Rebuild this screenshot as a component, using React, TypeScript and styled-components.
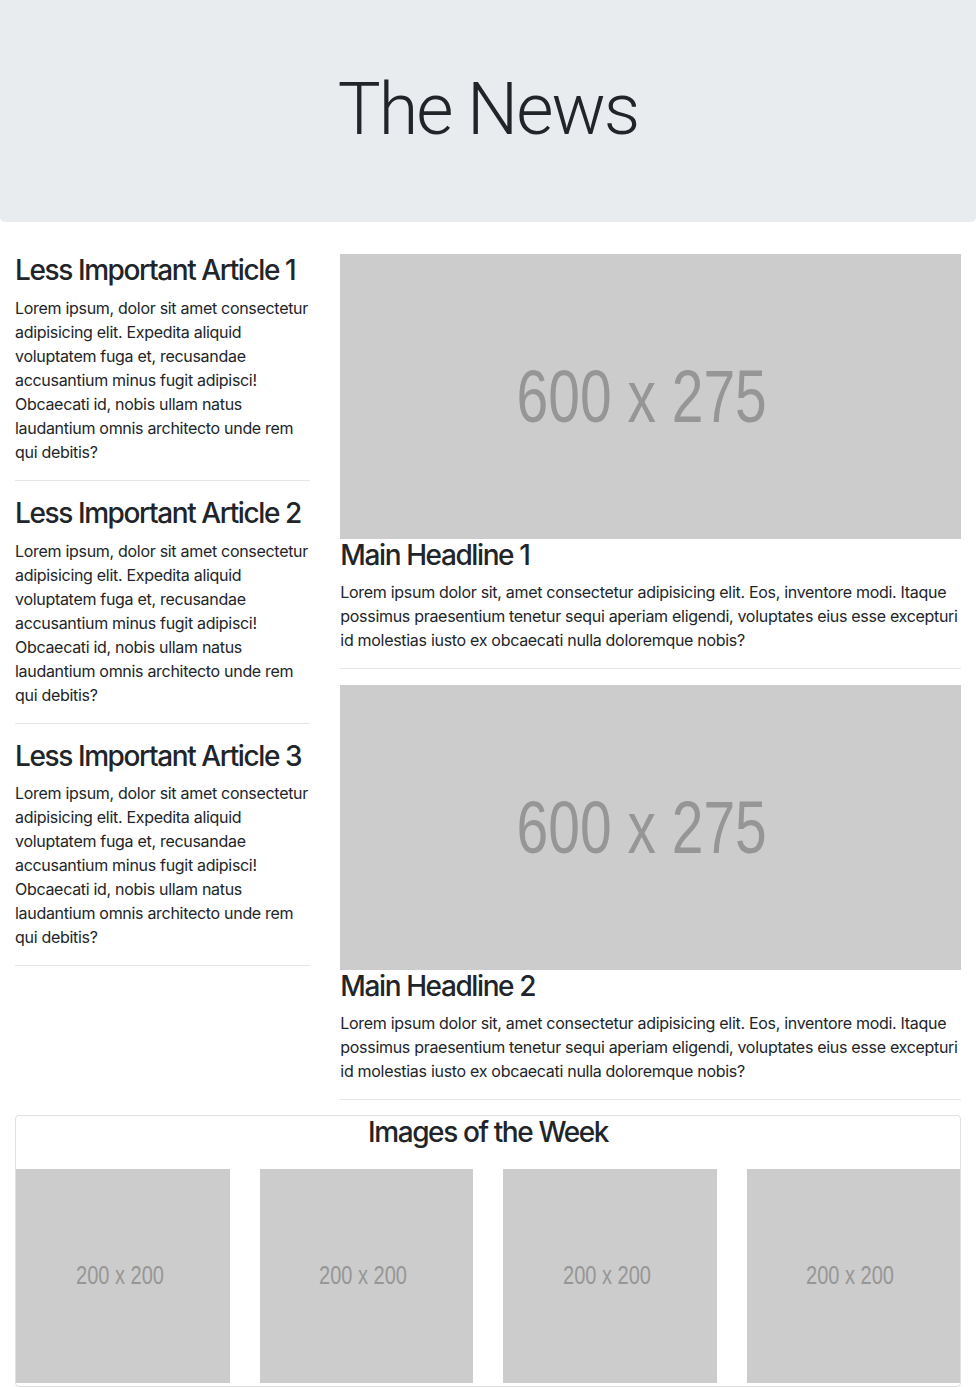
import styled, { createGlobalStyle } from 'styled-components';

const GlobalStyle = createGlobalStyle`
  *, *::before, *::after {
    box-sizing: border-box;
  }

  body {
    margin: 0;
    font-family: Inter, "Noto Sans", "Liberation Sans", sans-serif;
    font-size: 16px;
    line-height: 1.5;
    letter-spacing: -0.3px;
    color: #212529;
    background-color: #fff;
  }
`;

const LOREM_SIDE =
  'Lorem ipsum, dolor sit amet consectetur adipisicing elit. Expedita aliquid voluptatem fuga et, recusandae accusantium minus fugit adipisci! Obcaecati id, nobis ullam natus laudantium omnis architecto unde rem qui debitis?';

const LOREM_MAIN =
  'Lorem ipsum dolor sit, amet consectetur adipisicing elit. Eos, inventore modi. Itaque possimus praesentium tenetur sequi aperiam eligendi, voluptates eius esse excepturi id molestias iusto ex obcaecati nulla doloremque nobis?';

const Jumbotron = styled.header`
  padding: 64px 32px;
  margin-bottom: 32px;
  background-color: #e9ecef;
  border-radius: 0 0 4.8px 4.8px;
  text-align: center;
`;

const DisplayTitle = styled.h1`
  margin: 0 0 8px;
  font-family: Roboto, "Liberation Sans", sans-serif;
  font-size: 72px;
  font-weight: 300;
  line-height: 1.2;
  letter-spacing: -2px;
  transform: translateY(3px);
`;

const Container = styled.main`
  padding: 0 15px;
`;

const Row = styled.div`
  display: flex;
  margin: 0 -15px;
`;

const Column = styled.div<{ span: number }>`
  flex: 0 0 ${(p) => (p.span / 12) * 100}%;
  max-width: ${(p) => (p.span / 12) * 100}%;
  padding: 0 15px;
`;

const Heading = styled.h3`
  margin: 0 0 8px;
  font-size: 28px;
  font-weight: 500;
  line-height: 1.2;
  letter-spacing: -1.4px;
`;

const Text = styled.p`
  margin: 0 0 16px;
`;

const Rule = styled.hr`
  margin: 16px 0;
  border: 0;
  border-top: 1px solid rgba(0, 0, 0, 0.1);
`;

const Placeholder = styled.div<{ ratio: number; textSize: number }>`
  display: flex;
  align-items: center;
  justify-content: center;
  width: 100%;
  aspect-ratio: ${(p) => p.ratio};
  background-color: #cccccc;
  color: #969696;
  font-family: "Liberation Sans", Arial, sans-serif;
  font-size: ${(p) => p.textSize}px;
  letter-spacing: 0;
  overflow: hidden;

  span {
    display: inline-block;
    transform: translateX(-0.12em) scaleX(0.77);
    white-space: nowrap;
  }
`;

const Card = styled.section`
  margin-top: -1px;
  border: 1px solid rgba(0, 0, 0, 0.125);
  border-radius: 4px;
`;

const CardTitle = styled.h3`
  margin: 0 0 19px;
  font-size: 28px;
  font-weight: 500;
  line-height: 1.2;
  letter-spacing: -1.4px;
  text-align: center;
`;

const ImageRow = styled.div`
  display: flex;
  margin: 0 -15px;
  padding-bottom: 3px;
`;

const ImageCell = styled.div`
  flex: 0 0 25%;
  padding: 0 15px;
`;

const sideArticles = [1, 2, 3];
const mainArticles = [1, 2];

const App = () => (
  <>
    <GlobalStyle />
    <Jumbotron>
      <DisplayTitle>The News</DisplayTitle>
    </Jumbotron>

    <Container>
      <Row>
        {/* Less important articles */}
        <Column span={4}>
          {sideArticles.map((n) => (
            <article key={n}>
              <Heading>Less Important Article {n}</Heading>
              <Text>{LOREM_SIDE}</Text>
              <Rule />
            </article>
          ))}
        </Column>

        {/* Main headlines */}
        <Column span={8}>
          {mainArticles.map((n) => (
            <article key={n}>
              <Placeholder ratio={600 / 275} textSize={74}>
                <span>600 x 275</span>
              </Placeholder>
              <Heading>Main Headline {n}</Heading>
              <Text>{LOREM_MAIN}</Text>
              <Rule />
            </article>
          ))}
        </Column>
      </Row>

      {/* Images of the week */}
      <Card>
        <CardTitle>Images of the Week</CardTitle>
        <ImageRow>
          {[1, 2, 3, 4].map((n) => (
            <ImageCell key={n}>
              <Placeholder ratio={1} textSize={26}>
                <span>200 x 200</span>
              </Placeholder>
            </ImageCell>
          ))}
        </ImageRow>
      </Card>
    </Container>
  </>
);

export default App;
